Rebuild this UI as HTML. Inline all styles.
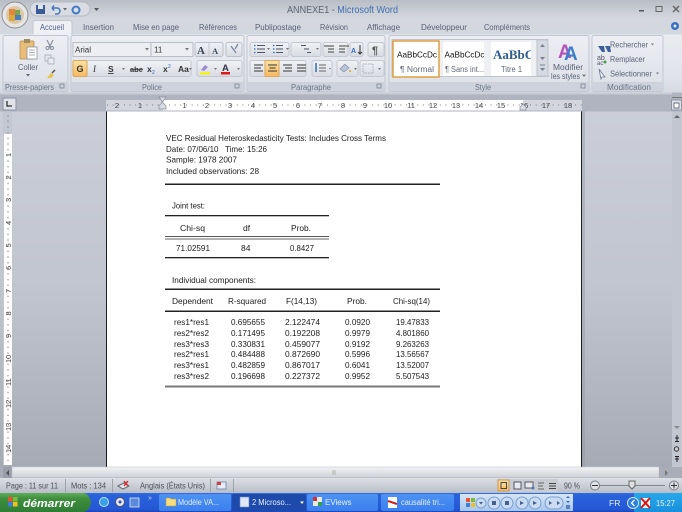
<!DOCTYPE html>
<html><head><meta charset="utf-8"><title>ANNEXE1 - Microsoft Word</title>
<style>
html,body{margin:0;padding:0;background:#c9ced8;width:682px;height:512px;overflow:hidden}
svg{display:block;position:absolute;left:0;top:0;filter:blur(.35px)}
text{font-family:"Liberation Sans",sans-serif}
.r{font-size:8.2px;fill:#57627a}
.d{font-size:8.5px;fill:#1c1c1c}
.s{font-size:8px;fill:#5a6478}
.g{font-size:8.6px;fill:#6a7488}
.rl{font-size:7.5px;fill:#444}
.st{font-size:8px;fill:#4e5058}
.tb{font-size:8px;fill:#e6eefc}
</style></head><body>
<svg width="682" height="512" viewBox="0 0 682 512" xmlns="http://www.w3.org/2000/svg">
<defs>
<linearGradient id="top" x1="0" y1="0" x2="0" y2="1"><stop offset="0" stop-color="#b9bdc5"/><stop offset=".5" stop-color="#d4d8de"/><stop offset="1" stop-color="#d3d7de"/></linearGradient>
<linearGradient id="rib" x1="0" y1="0" x2="0" y2="1"><stop offset="0" stop-color="#e9ebf0"/><stop offset=".75" stop-color="#e0e3ea"/><stop offset="1" stop-color="#d6dae2"/></linearGradient>
<linearGradient id="grp" x1="0" y1="0" x2="0" y2="1"><stop offset="0" stop-color="#eceef3"/><stop offset=".8" stop-color="#dfe2e9"/><stop offset="1" stop-color="#cfd4de"/></linearGradient>
<linearGradient id="doc" x1="0" y1="0" x2="0" y2="1"><stop offset="0" stop-color="#cbced8"/><stop offset=".5" stop-color="#c1c5cf"/><stop offset="1" stop-color="#a6aab4"/></linearGradient>
<linearGradient id="btn" x1="0" y1="0" x2="0" y2="1"><stop offset="0" stop-color="#f0f2f5"/><stop offset="1" stop-color="#d8dbe2"/></linearGradient>
<linearGradient id="or" x1="0" y1="0" x2="0" y2="1"><stop offset="0" stop-color="#fde3a8"/><stop offset="1" stop-color="#f9b85e"/></linearGradient>
<linearGradient id="stat" x1="0" y1="0" x2="0" y2="1"><stop offset="0" stop-color="#dcdfe4"/><stop offset="1" stop-color="#b9bdc6"/></linearGradient>
<linearGradient id="task" x1="0" y1="0" x2="0" y2="1"><stop offset="0" stop-color="#2f6fe4"/><stop offset=".12" stop-color="#2a62dc"/><stop offset=".85" stop-color="#2458d4"/><stop offset="1" stop-color="#1c45b8"/></linearGradient>
<linearGradient id="tbtn" x1="0" y1="0" x2="0" y2="1"><stop offset="0" stop-color="#4d92f2"/><stop offset="1" stop-color="#3a7fee"/></linearGradient>
<linearGradient id="start" x1="0" y1="0" x2="0" y2="1"><stop offset="0" stop-color="#5fae5c"/><stop offset=".3" stop-color="#3e8e3e"/><stop offset="1" stop-color="#2f7d35"/></linearGradient>
<linearGradient id="tray" x1="0" y1="0" x2="0" y2="1"><stop offset="0" stop-color="#26a8ec"/><stop offset="1" stop-color="#1a8fdc"/></linearGradient>
<linearGradient id="hs" x1="0" y1="0" x2="0" y2="1"><stop offset="0" stop-color="#f2f3f5"/><stop offset="1" stop-color="#ced1d7"/></linearGradient>
<linearGradient id="media" x1="0" y1="0" x2="0" y2="1"><stop offset="0" stop-color="#d6e6f8"/><stop offset="1" stop-color="#a6c6ec"/></linearGradient>
<clipPath id="c1"><rect x="443" y="42" width="41" height="34"/></clipPath>
<clipPath id="c2"><rect x="491" y="42" width="40" height="34"/></clipPath>
</defs>

<!-- top band -->
<rect width="682" height="36" fill="url(#top)"/>
<rect x="30" y="2" width="60" height="14" rx="7" fill="#d9dce3" stroke="#b6bac4"/>
<circle cx="15" cy="15" r="13" fill="#e6e6e6" stroke="#8d8f96"/>
<circle cx="15" cy="15" r="9" fill="#d9c9a8"/>
<rect x="9" y="9" width="6" height="6" fill="#e6863c"/><rect x="15" y="10" width="5" height="5" fill="#7ca44a"/><rect x="9" y="15" width="6" height="6" fill="#d9a93c"/><rect x="15" y="15" width="6" height="5" fill="#4a7cc0"/>
<rect x="36" y="5" width="9" height="9" fill="#3a5a9a"/><rect x="38" y="5" width="5" height="4" fill="#dfe6f2"/>
<path d="M52 8h5a3 3 0 0 1 0 6h-2M52 8l2-2.500M52 8l2 2.500" fill="none" stroke="#4477bb" stroke-width="1.500"/>
<path d="M63 8h4l-2 2.500z" fill="#666"/>
<circle cx="76" cy="10" r="3.500" fill="none" stroke="#3f7cc4" stroke-width="2"/>
<path d="M94 8h5l-2.500 3z" fill="#555"/>
<text x="287" y="13" font-size="10" fill="#5c6574" textLength="111" lengthAdjust="spacingAndGlyphs">ANNEXE1 - <tspan fill="#3f6fb0">Microsoft Word</tspan></text>
<rect x="639" y="10" width="5" height="1.500" fill="#555"/>
<rect x="656" y="6.500" width="6" height="5" fill="none" stroke="#666"/>
<path d="M673 6l6 6M679 6l-6 6" stroke="#666" stroke-width="1.500"/>

<!-- tabs -->
<path d="M33 35V23q0-2.500 2.500-2.500h34q2.500 0 2.500 2.500V35z" fill="#eef0f4" stroke="#c3c7cf"/>
<text x="40" y="30" font-size="8.300" fill="#4d6190" textLength="24" lengthAdjust="spacingAndGlyphs">Accueil</text>
<text x="83" y="30" class="r" textLength="31" lengthAdjust="spacingAndGlyphs">Insertion</text>
<text x="133" y="30" class="r" textLength="46" lengthAdjust="spacingAndGlyphs">Mise en page</text>
<text x="199" y="30" class="r" textLength="38" lengthAdjust="spacingAndGlyphs">Références</text>
<text x="255" y="30" class="r" textLength="46" lengthAdjust="spacingAndGlyphs">Publipostage</text>
<text x="320" y="30" class="r" textLength="28" lengthAdjust="spacingAndGlyphs">Révision</text>
<text x="367" y="30" class="r" textLength="33" lengthAdjust="spacingAndGlyphs">Affichage</text>
<text x="421" y="30" class="r" textLength="46" lengthAdjust="spacingAndGlyphs">Développeur</text>
<text x="484" y="30" class="r" textLength="46" lengthAdjust="spacingAndGlyphs">Compléments</text>
<circle cx="675" cy="26" r="4" fill="#3a70c0"/><circle cx="675" cy="26" r="1.500" fill="#dfe8f5"/>

<!-- ribbon -->
<rect x="0" y="34.500" width="682" height="58" fill="url(#rib)"/>
<g fill="url(#grp)" stroke="#c3c7d1">
<rect x="3" y="35.500" width="65" height="56" rx="2"/>
<rect x="71" y="35.500" width="173" height="56" rx="2"/>
<rect x="247" y="35.500" width="138" height="56" rx="2"/>
<rect x="389" y="35.500" width="200" height="56" rx="2"/>
<rect x="592" y="35.500" width="71" height="56" rx="2"/>
</g>
<g fill="#cdd2dc">
<rect x="4" y="82" width="63" height="9"/><rect x="72" y="82" width="171" height="9"/><rect x="248" y="82" width="136" height="9"/><rect x="390" y="82" width="198" height="9"/><rect x="593" y="82" width="69" height="9"/>
</g>
<text x="5" y="90" class="g" textLength="49" lengthAdjust="spacingAndGlyphs">Presse-papiers</text>
<text x="142" y="90" class="g" textLength="20" lengthAdjust="spacingAndGlyphs">Police</text>
<text x="291" y="90" class="g" textLength="40" lengthAdjust="spacingAndGlyphs">Paragraphe</text>
<text x="475" y="90" class="g" textLength="16" lengthAdjust="spacingAndGlyphs">Style</text>
<text x="607" y="90" class="g" textLength="44" lengthAdjust="spacingAndGlyphs">Modification</text>
<g fill="none" stroke="#7a8292" stroke-width=".8">
<rect x="60" y="84" width="4" height="4"/><rect x="235" y="84" width="4" height="4"/><rect x="377" y="84" width="4" height="4"/><rect x="581" y="84" width="4" height="4"/>
</g>

<!-- clipboard -->
<rect x="20" y="41" width="14" height="18" rx="1" fill="#e9bd78" stroke="#b08a50" stroke-width=".7"/>
<rect x="24" y="39" width="6" height="4" fill="#a08a60"/>
<rect x="27" y="47" width="10" height="12" fill="#fff" stroke="#7b8696" stroke-width=".7"/>
<path d="M29 50h6M29 52.500h6M29 55h6" stroke="#8a92a0" stroke-width=".7"/>
<text x="18" y="70" class="s" font-size="8.500" textLength="20" lengthAdjust="spacingAndGlyphs">Coller</text>
<path d="M26 74h4l-2 2.500z" fill="#666"/>
<path d="M47 40l4 8M53 40l-4 8" stroke="#8a8f9a" stroke-width="1.200"/><circle cx="47.500" cy="48" r="1.500" fill="none" stroke="#8a8f9a"/><circle cx="52" cy="48" r="1.500" fill="none" stroke="#8a8f9a"/>
<rect x="45" y="55" width="6" height="6" fill="#e8eaef" stroke="#9aa0ad" stroke-width=".7"/><rect x="48" y="58" width="6" height="6" fill="#e8eaef" stroke="#9aa0ad" stroke-width=".7"/>
<path d="M47 78l4-5 3 2-3 3z" fill="#e8c24a"/><path d="M52 73l3-3" stroke="#555" stroke-width="1.500"/>

<!-- font group -->
<rect x="73" y="42.500" width="78" height="14" fill="#eceef2" stroke="#b9bdc7"/>
<rect x="151" y="42.500" width="42" height="14" fill="#eceef2" stroke="#b9bdc7"/>
<text x="75" y="52.500" font-size="8" fill="#333">Arial</text>
<text x="154" y="52.500" font-size="8" fill="#333">11</text>
<path d="M145 48h4l-2 2.500zM185 48h4l-2 2.500z" fill="#777"/>
<rect x="195" y="42.500" width="28" height="14" rx="2" fill="url(#btn)" stroke="#bcc0c9"/>
<line x1="209" y1="43" x2="209" y2="56" stroke="#c5c8d0"/>
<text x="197" y="54" font-size="11" font-weight="bold" fill="#3c4658" style="font-family:'Liberation Serif',serif">A</text>
<text x="212" y="54" font-size="8.500" font-weight="bold" fill="#3c4658" style="font-family:'Liberation Serif',serif">A</text>
<rect x="226" y="42.500" width="16" height="14" rx="2" fill="url(#btn)" stroke="#bcc0c9"/>
<path d="M231 46l5 7M238 44l-3 5" stroke="#7a88a0" stroke-width="1.300"/>

<rect x="73" y="60.500" width="118" height="16" rx="2" fill="url(#btn)" stroke="#c5c8d0"/>
<rect x="73" y="60.500" width="14" height="16" rx="1.500" fill="url(#or)" stroke="#d9a85a"/>
<g font-size="9" fill="#333">
<text x="76.500" y="72" font-weight="bold">G</text>
<text x="93" y="72" font-style="italic" style="font-family:'Liberation Serif',serif">I</text>
<text x="108" y="72" font-weight="bold" text-decoration="underline" font-size="8.500">S</text>
<text x="130" y="72" font-weight="bold" font-size="7.500" text-decoration="line-through">abe</text>
<text x="147" y="72" font-weight="bold" font-size="8.500">x</text><text x="152" y="74" font-size="5" fill="#3366bb">2</text>
<text x="163" y="72" font-weight="bold" font-size="8.500">x</text><text x="168" y="68" font-size="5" fill="#3366bb">2</text>
<text x="178" y="72" font-size="8.500" font-weight="bold">Aa</text>
</g>
<path d="M122 68h3l-1.500 2zM189 68h3l-1.500 2z" fill="#777"/>
<rect x="197" y="60.500" width="45" height="16" rx="2" fill="url(#btn)" stroke="#c5c8d0"/>
<path d="M201 70l4-5 3 2-4 4z" fill="#9a8ad0"/><rect x="200" y="72" width="10" height="2.500" fill="#f5f020"/>
<path d="M214 68h3l-1.500 2zM237 68h3l-1.500 2z" fill="#777"/>
<text x="222" y="71" font-size="9.500" font-weight="bold" fill="#334">A</text><rect x="221" y="72" width="9" height="2.500" fill="#e01818"/>

<!-- paragraph group -->
<rect x="250" y="42.500" width="39" height="14" rx="2" fill="url(#btn)" stroke="#c5c8d0"/>
<rect x="291" y="42.500" width="30" height="14" rx="2" fill="url(#btn)" stroke="#c5c8d0"/>
<rect x="350" y="42.500" width="13" height="14" rx="2" fill="url(#btn)" stroke="#c5c8d0"/>
<rect x="368" y="42.500" width="16" height="14" rx="2" fill="url(#btn)" stroke="#c5c8d0"/>
<rect x="323" y="42.500" width="25" height="14" rx="2" fill="url(#btn)" stroke="#c5c8d0"/>
<g stroke="#4a5568" stroke-width="1">
<path d="M257 45.500h8M257 49h8M257 52.500h8"/>
<path d="M276 45.500h7M276 49h7M276 52.500h7"/>
<path d="M301 45.500h5M304 49h5M307 52.500h4"/>
</g>
<path d="M254 45.500h1.500M254 49h1.500M254 52.500h1.500M273 45.500h1.500M273 49h1.500M273 52.500h1.500" stroke="#2f6fc0" stroke-width="1.200"/>
<path d="M267 48h3l-1.500 2zM286 48h3l-1.500 2zM316 48h3l-1.500 2z" fill="#777"/>
<g stroke="#444" stroke-width="1"><path d="M322 46h10M326 49h6M326 52h6M337 46h10M337 49h6M337 52h6" transform="translate(2 0)"/></g>
<text x="351" y="53" font-size="7" fill="#2f6fc0" font-weight="bold">A</text><path d="M360 45v9M358 52l2 2 2-2" fill="none" stroke="#333"/>
<text x="372" y="54" font-size="11" font-weight="bold" fill="#555">¶</text>

<rect x="250" y="60.500" width="56" height="16" rx="2" fill="url(#btn)" stroke="#c5c8d0"/>
<rect x="265" y="60.500" width="14" height="16" fill="url(#or)" stroke="#d9a85a"/>
<g stroke="#333" stroke-width="1.100">
<path d="M254 65h9M254 68h7M254 71h9"/>
<path d="M268 65h9M269.500 68h6M268 71h9"/>
<path d="M283 65h9M285 68h7M283 71h9"/>
<path d="M297 65h9M297 68h9M297 71h9"/>
</g>
<rect x="312" y="60.500" width="20" height="16" rx="2" fill="url(#btn)" stroke="#c5c8d0"/>
<path d="M319 65h7M319 68h7M319 71h7" stroke="#666"/><path d="M316 63v9" stroke="#2f6fc0" stroke-width="1.500"/>
<path d="M329 68h2l-1 1.500z" fill="#777"/>
<rect x="337" y="60.500" width="21" height="16" rx="2" fill="url(#btn)" stroke="#c5c8d0"/>
<path d="M340 69l5-5 4 4-5 4z" fill="#b8c4d8" stroke="#7a8aa5" stroke-width=".6"/><path d="M350 70v2" stroke="#d9a020" stroke-width="1.500"/>
<rect x="360" y="60.500" width="24" height="16" rx="2" fill="url(#btn)" stroke="#c5c8d0"/>
<rect x="363" y="64" width="10" height="9" fill="none" stroke="#a8acb5" stroke-dasharray="1.500 1"/>
<path d="M354 68h3l-1.500 2zM378 68h3l-1.500 2z" fill="#777"/>

<!-- styles -->
<rect x="392" y="39.500" width="156" height="37" fill="#eef0f4" stroke="#bfc3cd"/>
<rect x="393" y="41" width="46" height="36" fill="#fff" stroke="#e0a040" stroke-width="1.500"/>
<rect x="443" y="42" width="41" height="34" fill="#fff"/>
<rect x="491" y="42" width="40" height="34" fill="#fff"/>
<text x="397" y="57.500" font-size="8.500" fill="#111" textLength="40" lengthAdjust="spacingAndGlyphs">AaBbCcDc</text>
<text x="444.500" y="57.500" font-size="8.500" fill="#111" textLength="40" lengthAdjust="spacingAndGlyphs" clip-path="url(#c1)">AaBbCcDc</text>
<text x="493" y="59" font-size="13" font-weight="bold" fill="#2f5c8f" clip-path="url(#c2)" style="font-family:'Liberation Serif',serif">AaBbCc</text>
<text x="400" y="72" font-size="8" fill="#5d677a" textLength="34" lengthAdjust="spacingAndGlyphs">¶ Normal</text>
<text x="445" y="72" font-size="8" fill="#5d677a" textLength="39" lengthAdjust="spacingAndGlyphs">¶ Sans int...</text>
<text x="501" y="72" font-size="8" fill="#5d677a" textLength="21" lengthAdjust="spacingAndGlyphs">Titre 1</text>
<rect x="537" y="40" width="11" height="36" fill="#d5d9e1" stroke="#bfc3cd"/>
<path d="M540 47h5l-2.500-3zM540 57h5l-2.500 3zM540 68h5l-2.500 3z" fill="#7a8292"/>
<path d="M540 65h5" stroke="#7a8292"/>
<text x="558" y="58" font-size="19" font-weight="bold" fill="#b454b8">A</text>
<text x="564" y="60" font-size="19" font-weight="bold" fill="#3f7fc8">A</text>
<text x="553" y="70" class="s" font-size="8.500" textLength="30" lengthAdjust="spacingAndGlyphs">Modifier</text>
<text x="551" y="79" class="s" font-size="8.500" textLength="29" lengthAdjust="spacingAndGlyphs">les styles</text>
<path d="M582 74.500h4l-2 2.500z" fill="#777"/>

<!-- modification -->
<path d="M598 46h6l1 6h-3zM605 46h5l1 6h-3z" fill="#3c5f99"/>
<text x="610" y="47.500" class="s" font-size="8.300" textLength="38" lengthAdjust="spacingAndGlyphs">Rechercher</text>
<path d="M651 43.500h3l-1.500 2z" fill="#777"/>
<text x="597" y="60" font-size="7" fill="#556">ab</text><text x="597" y="65" font-size="6" fill="#556">ac</text><circle cx="605" cy="62" r="1.500" fill="#4a9a4a"/>
<text x="610" y="62" class="s" font-size="8.300" textLength="35" lengthAdjust="spacingAndGlyphs">Remplacer</text>
<path d="M599 69l6 8-3 0-1 2z" fill="#f2f4f8" stroke="#6a7a94" stroke-width=".8"/>
<text x="610" y="76.500" class="s" font-size="8.300" textLength="42" lengthAdjust="spacingAndGlyphs">Sélectionner</text>
<path d="M656 72.500h3l-1.500 2z" fill="#777"/>

<!-- band beneath ribbon -->
<rect x="0" y="92.500" width="682" height="19" fill="#b0b4c0"/>
<rect x="0" y="92.500" width="682" height="2" fill="#c9ccd4"/>
<rect x="3" y="98" width="13" height="12" fill="#dfe2e8" stroke="#8d93a2"/>
<path d="M7 101v5h5" fill="none" stroke="#333" stroke-width="1.300"/>

<!-- doc bg -->
<rect x="0" y="111.500" width="682" height="356" fill="url(#doc)"/>

<!-- h ruler -->
<rect x="106" y="100" width="476" height="10.500" fill="#d3d6de"/>
<rect x="163" y="100" width="360" height="10.500" fill="#fff"/>
<path d="M106 105h476" stroke="#777" stroke-width="1" stroke-dasharray="1 4.640" stroke-dashoffset="-1"/>
<g text-anchor="middle">
<text x="117" y="108" class="rl">2</text><text x="140" y="108" class="rl">1</text>
<text x="184.600" y="108" class="rl">1</text><text x="207" y="108" class="rl">2</text><text x="230" y="108" class="rl">3</text><text x="253" y="108" class="rl">4</text><text x="275" y="108" class="rl">5</text><text x="298" y="108" class="rl">6</text><text x="320" y="108" class="rl">7</text><text x="343" y="108" class="rl">8</text><text x="365" y="108" class="rl">9</text><text x="388" y="108" class="rl">10</text><text x="411" y="108" class="rl">11</text><text x="433" y="108" class="rl">12</text><text x="456" y="108" class="rl">13</text><text x="479" y="108" class="rl">14</text><text x="501" y="108" class="rl">15</text><text x="524" y="108" class="rl">16</text><text x="546" y="108" class="rl">17</text><text x="568" y="108" class="rl">18</text>
</g>
<path d="M159 97h7l-3.500 5 3.500 4v3h-7v-3l3.500-4z" fill="#d9dce2" stroke="#8a8f9a" stroke-width=".7"/>
<path d="M520 110v-3l3-3 3 3v3z" fill="#d9dce2" stroke="#8a8f9a" stroke-width=".7"/>

<!-- v ruler -->
<rect x="3" y="112" width="9" height="22" fill="#c3c7d1"/>
<rect x="4" y="134" width="8" height="331" fill="#fff"/>
<rect x="3" y="134" width="1" height="331" fill="#c3c7d1"/>
<path d="M8 115v350" stroke="#888" stroke-width="1" stroke-dasharray="1.500 4.150"/>
<g>
<text transform="translate(11,157) rotate(-90)" class="rl">1</text>
<text transform="translate(11,179.500) rotate(-90)" class="rl">2</text>
<text transform="translate(11,202) rotate(-90)" class="rl">3</text>
<text transform="translate(11,225) rotate(-90)" class="rl">4</text>
<text transform="translate(11,247.500) rotate(-90)" class="rl">5</text>
<text transform="translate(11,270) rotate(-90)" class="rl">6</text>
<text transform="translate(11,293) rotate(-90)" class="rl">7</text>
<text transform="translate(11,315.500) rotate(-90)" class="rl">8</text>
<text transform="translate(11,338) rotate(-90)" class="rl">9</text>
<text transform="translate(11,363) rotate(-90)" class="rl">10</text>
<text transform="translate(11,386) rotate(-90)" class="rl">11</text>
<text transform="translate(11,408) rotate(-90)" class="rl">12</text>
<text transform="translate(11,431) rotate(-90)" class="rl">13</text>
<text transform="translate(11,453) rotate(-90)" class="rl">14</text>
</g>

<!-- page -->
<rect x="106" y="111.500" width="476" height="356" fill="#000" opacity=".85"/>
<rect x="107" y="111.500" width="474" height="356" fill="#fff"/>
<rect x="582" y="111.500" width="3" height="356" fill="#8f939c" opacity=".4"/>

<text x="166" y="141" class="d" textLength="220" lengthAdjust="spacingAndGlyphs">VEC Residual Heteroskedasticity Tests: Includes Cross Terms</text>
<text x="166" y="152" class="d" textLength="101" lengthAdjust="spacingAndGlyphs">Date: 07/06/10&#160;&#160; Time: 15:26</text>
<text x="166" y="162.500" class="d" textLength="71" lengthAdjust="spacingAndGlyphs">Sample: 1978 2007</text>
<text x="166" y="174" class="d" textLength="93" lengthAdjust="spacingAndGlyphs">Included observations: 28</text>
<rect x="165" y="183.500" width="275" height="1.500" fill="#222"/>

<text x="172" y="208.500" class="d" textLength="33" lengthAdjust="spacingAndGlyphs">Joint test:</text>
<rect x="165" y="215" width="164" height="1.300" fill="#222"/>
<text x="180" y="231" class="d" textLength="25" lengthAdjust="spacingAndGlyphs">Chi-sq</text>
<text x="243" y="231" class="d">df</text>
<text x="291" y="231" class="d" textLength="20" lengthAdjust="spacingAndGlyphs">Prob.</text>
<rect x="165" y="236" width="164" height="1" fill="#555"/>
<rect x="165" y="238.500" width="164" height="1" fill="#666"/>
<text x="176" y="251" class="d" textLength="34" lengthAdjust="spacingAndGlyphs">71.02591</text>
<text x="241" y="251" class="d">84</text>
<text x="290" y="251" class="d" textLength="24" lengthAdjust="spacingAndGlyphs">0.8427</text>
<rect x="165" y="257" width="164" height="1.300" fill="#222"/>

<text x="172" y="283" class="d" textLength="84" lengthAdjust="spacingAndGlyphs">Individual components:</text>
<rect x="165" y="288.500" width="275" height="1.500" fill="#222"/>
<text x="172" y="304" class="d" textLength="41" lengthAdjust="spacingAndGlyphs">Dependent</text>
<text x="228" y="304" class="d" textLength="38" lengthAdjust="spacingAndGlyphs">R-squared</text>
<text x="286" y="304" class="d" textLength="31" lengthAdjust="spacingAndGlyphs">F(14,13)</text>
<text x="347" y="304" class="d" textLength="20" lengthAdjust="spacingAndGlyphs">Prob.</text>
<text x="393" y="304" class="d" textLength="37" lengthAdjust="spacingAndGlyphs">Chi-sq(14)</text>
<rect x="165" y="310.500" width="275" height="1.500" fill="#222"/>

<g lengthAdjust="spacingAndGlyphs">
<text x="174" y="325" class="d" textLength="35" lengthAdjust="spacingAndGlyphs">res1*res1</text><text x="231" y="325" class="d" textLength="34" lengthAdjust="spacingAndGlyphs">0.695655</text><text x="285" y="325" class="d" textLength="35" lengthAdjust="spacingAndGlyphs">2.122474</text><text x="345" y="325" class="d" textLength="25" lengthAdjust="spacingAndGlyphs">0.0920</text><text x="396" y="325" class="d" textLength="33" lengthAdjust="spacingAndGlyphs">19.47833</text>
<text x="174" y="336" class="d" textLength="35" lengthAdjust="spacingAndGlyphs">res2*res2</text><text x="231" y="336" class="d" textLength="34" lengthAdjust="spacingAndGlyphs">0.171495</text><text x="285" y="336" class="d" textLength="35" lengthAdjust="spacingAndGlyphs">0.192208</text><text x="345" y="336" class="d" textLength="25" lengthAdjust="spacingAndGlyphs">0.9979</text><text x="396" y="336" class="d" textLength="33" lengthAdjust="spacingAndGlyphs">4.801860</text>
<text x="174" y="347" class="d" textLength="35" lengthAdjust="spacingAndGlyphs">res3*res3</text><text x="231" y="347" class="d" textLength="34" lengthAdjust="spacingAndGlyphs">0.330831</text><text x="285" y="347" class="d" textLength="35" lengthAdjust="spacingAndGlyphs">0.459077</text><text x="345" y="347" class="d" textLength="25" lengthAdjust="spacingAndGlyphs">0.9192</text><text x="396" y="347" class="d" textLength="33" lengthAdjust="spacingAndGlyphs">9.263263</text>
<text x="174" y="357" class="d" textLength="35" lengthAdjust="spacingAndGlyphs">res2*res1</text><text x="231" y="357" class="d" textLength="34" lengthAdjust="spacingAndGlyphs">0.484488</text><text x="285" y="357" class="d" textLength="35" lengthAdjust="spacingAndGlyphs">0.872690</text><text x="345" y="357" class="d" textLength="25" lengthAdjust="spacingAndGlyphs">0.5996</text><text x="396" y="357" class="d" textLength="33" lengthAdjust="spacingAndGlyphs">13.56567</text>
<text x="174" y="368" class="d" textLength="35" lengthAdjust="spacingAndGlyphs">res3*res1</text><text x="231" y="368" class="d" textLength="34" lengthAdjust="spacingAndGlyphs">0.482859</text><text x="285" y="368" class="d" textLength="35" lengthAdjust="spacingAndGlyphs">0.867017</text><text x="345" y="368" class="d" textLength="25" lengthAdjust="spacingAndGlyphs">0.6041</text><text x="396" y="368" class="d" textLength="33" lengthAdjust="spacingAndGlyphs">13.52007</text>
<text x="174" y="379" class="d" textLength="35" lengthAdjust="spacingAndGlyphs">res3*res2</text><text x="231" y="379" class="d" textLength="34" lengthAdjust="spacingAndGlyphs">0.196698</text><text x="285" y="379" class="d" textLength="35" lengthAdjust="spacingAndGlyphs">0.227372</text><text x="345" y="379" class="d" textLength="25" lengthAdjust="spacingAndGlyphs">0.9952</text><text x="396" y="379" class="d" textLength="33" lengthAdjust="spacingAndGlyphs">5.507543</text>
</g>
<rect x="165" y="385.500" width="275" height="2" fill="#777"/>

<!-- right scrollbar -->
<rect x="672" y="97" width="10" height="371" fill="#c2c6d0"/>
<rect x="672" y="92.500" width="10" height="19" fill="#b0b4c0"/>
<rect x="672" y="97" width="10" height="1" fill="#777"/>
<rect x="671.500" y="100" width="10" height="10" fill="#dfe2e8" stroke="#8d93a2"/>
<path d="M674 103h5v5h-5z" fill="#fff" stroke="#446" stroke-width=".7"/>
<path d="M674 118h6l-3-3z" fill="#666"/>
<path d="M674 426h6l-3 3z" fill="#888"/>
<path d="M677 435v6M675 438h4M675 441.500h4" stroke="#222" stroke-width="1"/>
<circle cx="676.500" cy="449" r="2.200" fill="#ccc" stroke="#333"/>
<path d="M677 457v5M675 456.500h4M675 459h4" stroke="#222" stroke-width="1"/>

<!-- h scrollbar -->
<rect x="0" y="467" width="682" height="11" fill="#a9adb7"/>
<rect x="3" y="467" width="9" height="11" fill="#9a9ea8"/>
<path d="M9 470v6l-3-3z" fill="#555"/>
<rect x="12" y="467" width="647" height="10.500" fill="url(#hs)" stroke="#bfc3cb" stroke-width=".6"/>
<rect x="659" y="467" width="12" height="10.500" fill="#a9adb7"/>
<path d="M665 470v6l3-3z" fill="#777"/>
<path d="M333 470v5M335 470v5" stroke="#999" stroke-width=".7"/>

<!-- status -->
<rect x="0" y="478" width="682" height="15" fill="url(#stat)"/>
<text x="6" y="488.500" class="st" textLength="52" lengthAdjust="spacingAndGlyphs">Page : 11 sur 11</text>
<text x="71" y="488.500" class="st" textLength="35" lengthAdjust="spacingAndGlyphs">Mots : 134</text>
<text x="140" y="488.500" class="st" textLength="65" lengthAdjust="spacingAndGlyphs">Anglais (États Unis)</text>
<path d="M65.500 479v13M112.500 479v13M210.500 479v13M233.500 479v13" stroke="#9ea2ab"/>
<path d="M118 486l6-3 5 3-6 3z" fill="#e8eaee" stroke="#667"/>
<path d="M124 481l4 5M128 481l-4 5" stroke="#d82020" stroke-width="1.300"/>
<rect x="217" y="482" width="9" height="7" fill="#e8ecf5" stroke="#5878aa" stroke-width=".7"/><rect x="217" y="482" width="4" height="3" fill="#d04040"/>
<rect x="497" y="479" width="61" height="13" fill="#c9ccd3"/>
<rect x="498" y="480" width="11" height="11" fill="url(#or)" stroke="#c99a50"/>
<rect x="501" y="482.500" width="5.500" height="6" fill="none" stroke="#444"/>
<rect x="514" y="482" width="7" height="7" fill="#e8eaee" stroke="#556"/>
<rect x="525" y="482" width="8" height="6" fill="#e8eaee" stroke="#556"/><circle cx="533" cy="488" r="1.500" fill="#4477bb"/>
<path d="M538 483h6M538 486h5M538 489h6" stroke="#666"/>
<path d="M549 483.500h7M549 486h7M549 488.500h7" stroke="#444"/>
<text x="564" y="488.500" class="st" font-size="8.200" textLength="16" lengthAdjust="spacingAndGlyphs">90 %</text>
<path d="M595 485.500h70" stroke="#888"/>
<circle cx="595" cy="485.500" r="4.500" fill="#dfe1e6" stroke="#7a7f8a"/><path d="M592 485.500h6" stroke="#333"/>
<circle cx="674" cy="485.500" r="4.500" fill="#dfe1e6" stroke="#7a7f8a"/><path d="M671 485.500h6M674 482.500v6" stroke="#333"/>
<path d="M629 481h6v5l-3 3-3-3z" fill="#dfe1e6" stroke="#666"/>

<!-- taskbar -->
<rect x="0" y="493" width="682" height="19" fill="url(#task)"/>
<path d="M0 493H84q6 2 7 9.500q-1 7.500-7 9.500H0z" fill="url(#start)"/>
<rect x="8" y="497" width="4.500" height="4.500" fill="#e8542c"/><rect x="13" y="497" width="4.500" height="4.500" fill="#7fbb3a"/><rect x="8" y="502" width="4.500" height="4.500" fill="#3a7fdc"/><rect x="13" y="502" width="4.500" height="4.500" fill="#f2c020"/>
<text x="23" y="507" font-size="11" font-weight="bold" font-style="italic" fill="#fff" textLength="52" lengthAdjust="spacingAndGlyphs">démarrer</text>
<circle cx="104" cy="502" r="4.500" fill="#3aa0e8" stroke="#bfe4fa"/>
<circle cx="120" cy="502" r="4.500" fill="#e6e6ee" stroke="#556"/><circle cx="120" cy="502" r="1.500" fill="#2a4fa0"/>
<rect x="130" y="498" width="9" height="9" fill="#5a8ad8" stroke="#dfe8f8" stroke-width=".8"/>
<text x="148" y="500" font-size="7" fill="#c9dcf8">»</text>

<rect x="159" y="494" width="72" height="17" rx="2" fill="url(#tbtn)"/>
<path d="M166 498h4l1 1h5v7h-10z" fill="#f5dc80" stroke="#b89a40" stroke-width=".5"/>
<text x="178" y="505" class="tb" textLength="41" lengthAdjust="spacingAndGlyphs">Modèle VA...</text>
<rect x="232" y="494" width="74" height="17" rx="2" fill="#1e4aac"/>
<rect x="240" y="497" width="9" height="10" fill="#dfe6f6" stroke="#6688c0" stroke-width=".6"/>
<text x="252" y="505" class="tb" textLength="39" lengthAdjust="spacingAndGlyphs">2 Microso...</text>
<path d="M300 501.500h4l-2 2.500z" fill="#fff"/>
<rect x="307" y="494" width="71" height="17" rx="2" fill="url(#tbtn)"/>
<rect x="313" y="497" width="9" height="9" fill="#e8e8e8"/><rect x="313" y="497" width="4" height="4" fill="#d03030"/><rect x="318" y="502" width="4" height="4" fill="#30a050"/>
<text x="325" y="505" class="tb">EViews</text>
<rect x="381" y="494" width="73" height="17" rx="2" fill="url(#tbtn)"/>
<rect x="388" y="497" width="9" height="11" fill="#fff"/><path d="M388 501l9 3" stroke="#d02020" stroke-width="2"/>
<text x="401" y="505" class="tb" textLength="44" lengthAdjust="spacingAndGlyphs">causalité tri...</text>

<rect x="460" y="494" width="113" height="17" fill="url(#media)"/>
<rect x="466" y="498" width="4" height="4" fill="#e8542c"/><rect x="471" y="498" width="4" height="4" fill="#7fbb3a"/><rect x="466" y="503" width="4" height="4" fill="#3a7fdc"/><rect x="471" y="503" width="4" height="4" fill="#f2c020"/>
<g fill="#c9dcf4" stroke="#7ca0d0">
<circle cx="481" cy="503" r="5"/><circle cx="494" cy="503" r="6"/><circle cx="507" cy="503" r="6"/><circle cx="522" cy="503" r="6"/><circle cx="535" cy="503" r="6"/><rect x="545" y="497" width="18" height="12" rx="6"/>
</g>
<g fill="#44608c">
<rect x="492" y="501" width="4" height="4"/><rect x="505" y="501" width="4" height="4"/><path d="M520 501v4l4-2zM533 501v4l4-2zM549 501v4l3-2zM557 501v4l3-2z"/><path d="M479 502h4l-2 2.500z"/>
</g>
<path d="M566 498h4l-2-2zM566 501h4l-2 2z" fill="#3a6ab0"/><rect x="566" y="505" width="4" height="4" fill="#5a82c0"/>

<rect x="634" y="493" width="48" height="19" fill="url(#tray)"/>
<text x="609" y="506" font-size="8.500" fill="#e8f0fc">FR</text>
<circle cx="633" cy="503" r="5.500" fill="#2a7ce0" stroke="#cfe4fa"/><path d="M634.500 500l-3 3 3 3" fill="none" stroke="#fff" stroke-width="1.300"/>
<rect x="641" y="498" width="9" height="10" fill="#f2f2f2"/><path d="M641 498l9 10M650 498l-9 10" stroke="#d81818" stroke-width="2"/>
<text x="656" y="506" font-size="8.500" fill="#e8f4fc" textLength="19" lengthAdjust="spacingAndGlyphs">15:27</text>
</svg>
</body></html>
